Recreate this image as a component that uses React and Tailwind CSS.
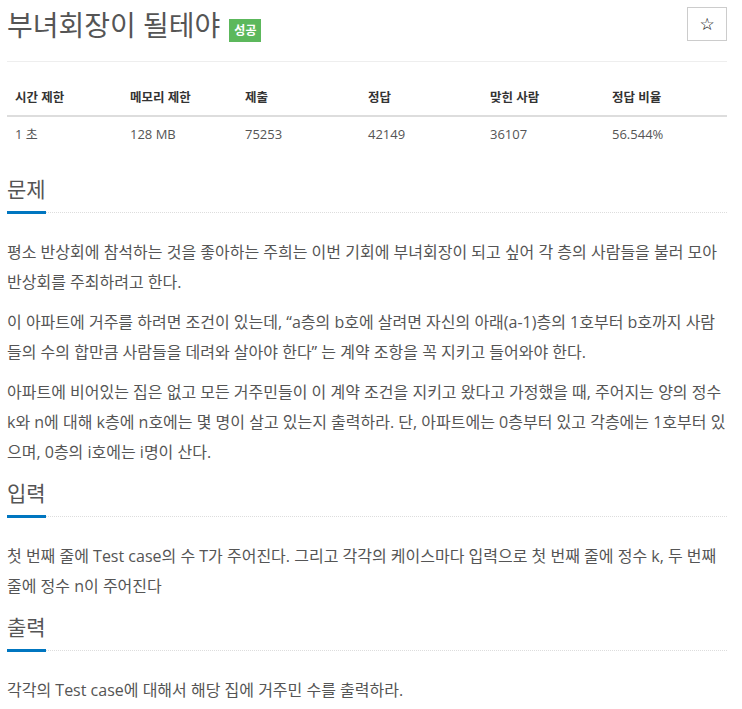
import React from "react";

const stats = [
  ["시간 제한", "1 초"],
  ["메모리 제한", "128 MB"],
  ["제출", "75253"],
  ["정답", "42149"],
  ["맞힌 사람", "36107"],
  ["정답 비율", "56.544%"],
];

const Section = ({ title, children }) => (
  <section className="mb-[11px]">
    <div className="border-b border-dotted border-[#ddd]">
      <h2 className="inline-block -mb-[2px] border-b-[3px] border-[#0076c0] pb-[7px] text-[21px] leading-[30px] text-[#555]">
        {title}
      </h2>
    </div>
    <div className="mt-[24px] flex flex-col gap-[10px] text-[16px] leading-[30px] text-[#555]">
      {children}
    </div>
  </section>
);

export default function App() {
  return (
    <div className="min-h-[709px] w-full bg-white font-['Open_Sans','Noto_Sans_CJK_KR',sans-serif]">
      <div className="w-[734px] px-[7px] pt-[5px]">
        <div className="flex items-start justify-between">
          <div className="flex items-end">
            <h1 className="text-[28px] leading-[40px] text-[#555]">부녀회장이 될테야</h1>
            <span className="mb-[3px] ml-[9px] h-[23px] bg-[#5cb85c] px-[5px] text-[12px] font-bold leading-[23px] text-white">
              성공
            </span>
          </div>
          <button className="mt-[2px] flex h-[34px] w-[40px] items-center justify-center border border-[#ccc] bg-white font-['DejaVu_Sans',sans-serif] text-[17px] leading-none text-black">
            ☆
          </button>
        </div>

        <div className="mt-[16px] border-t border-[#eee]" />

        <div className="mt-[19px] grid grid-cols-[115px_115px_123px_122px_122px_123px]">
          {stats.map(([h]) => (
            <div
              key={h}
              className="flex h-[36px] items-center border-b-2 border-[#ddd] px-[8px] text-[12.5px] font-bold text-[#333]"
            >
              {h}
            </div>
          ))}
          {stats.map(([h, v]) => (
            <div key={h + v} className="flex h-[35px] items-center px-[8px] text-[13px] text-[#555]">
              {v}
            </div>
          ))}
        </div>

        <div className="mt-[22px]">
          <Section title="문제">
            <p>
              평소 반상회에 참석하는 것을 좋아하는 주희는 이번 기회에 부녀회장이 되고 싶어 각 층의 사람들을 불러 모아
              반상회를 주최하려고 한다.
            </p>
            <p>
              이 아파트에 거주를 하려면 조건이 있는데, “a층의 b호에 살려면 자신의 아래(a-1)층의 1호부터 b호까지
              사람들의 수의 합만큼 사람들을 데려와 살아야 한다” 는 계약 조항을 꼭 지키고 들어와야 한다.
            </p>
            <p>
              아파트에 비어있는 집은 없고 모든 거주민들이 이 계약 조건을 지키고 왔다고 가정했을 때, 주어지는 양의 정수
              k와 n에 대해 k층에 n호에는 몇 명이 살고 있는지 출력하라. 단, 아파트에는 0층부터 있고 각층에는 1호부터
              있으며, 0층의 i호에는 i명이 산다.
            </p>
          </Section>

          <Section title="입력">
            <p>
              첫 번째 줄에 Test case의 수 T가 주어진다. 그리고 각각의 케이스마다 입력으로 첫 번째 줄에 정수 k, 두 번째
              줄에 정수 n이 주어진다
            </p>
          </Section>

          <Section title="출력">
            <p>각각의 Test case에 대해서 해당 집에 거주민 수를 출력하라.</p>
          </Section>
        </div>
      </div>
    </div>
  );
}
